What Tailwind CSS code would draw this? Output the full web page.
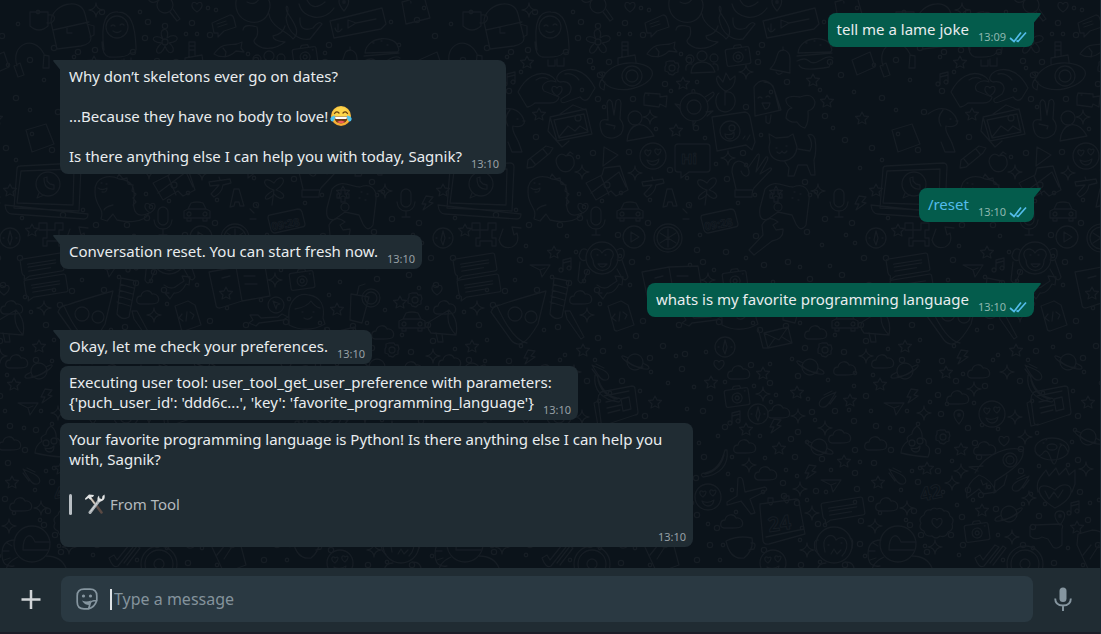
<!DOCTYPE html>
<html lang="en">
<head>
<meta charset="utf-8">
<meta name="viewport" content="width=device-width, initial-scale=1">
<title>Chat</title>
<script src="https://cdn.jsdelivr.net/npm/@tailwindcss/browser@4"></script>
</head>
<body class="relative isolate flex min-h-screen flex-col overflow-x-hidden border-r border-[#1b2a33] bg-[#0b131a] font-['Noto_Sans',sans-serif] text-[15px] leading-5 text-[#e9edef]">

<!-- Wallpaper doodles: one 433px wide group, repeated sideways -->
<svg class="pointer-events-none absolute inset-0 -z-10 h-full w-full fill-none stroke-[#161d24]" stroke-width="1.3" stroke-linejoin="round" stroke-linecap="round" aria-hidden="true">
  <defs>
    <path id="star" d="M0-6 2-2 6.500-1.500 3 2 4 6 0 4-4 6-3 2-6.500-1.500-2-2Z"/>
    <path id="spark" d="M0-7Q.5-.5 7 0 .5.5 0 7-.5.5-7 0-.5-.5 0-7Z"/>
    <path id="cloud" d="M-8 6C-13 5-12-2-7-2-6-8 2-9 4-4 9-5 12 0 10 4 9 6 5 6 0 6Z"/>
    <g id="planet"><circle r="8"/><path d="M-7-4C-14-8-16-6-8 0S14 9 14 6 10 3 8 1M-8-1C-2 4 4 6 8 5"/></g>
    <path id="heart" d="M0 5C-9-1-4-8 0-3 4-8 9-1 0 5Z"/>
    <path id="bolt" d="M-2-7 5-6 1-1 5 0-5 7-2 1-6 1Z"/>
    <g id="gear"><circle r="3"/><path d="M-2-7h4l1 2 3 0 1 4-1 2 0 3-3 1-2 2-4-1-1-2-3-1 0-4 1-2 0-3 3-1Z"/></g>
    <g id="note"><path d="M-3 5V-5L5-7V3M-3-2 5-4"/><circle cx="-5" cy="5" r="2"/><circle cx="3" cy="3" r="2"/></g>
    <g id="camera" transform="rotate(-8)"><rect x="-12" y="-8" width="24" height="17" rx="2"/><circle r="5" cy="1"/><circle r="2" cy="1"/><path d="M-4-8-2-11H4L5-8M8-5h1"/></g>
    <g id="compass"><circle r="10"/><path d="M-2 2 0-7 2 0 0 7ZM-7 0h1M6 0h1"/></g>
    <g id="msg" transform="rotate(-9)"><path d="M-19-9H19Q21-9 21-7V7Q21 9 19 9H-14L-20 12-19 8Q-21 7-21 5V-7Q-21-9-19-9ZM-14-3H14M-14 0H14M-14 4H8"/></g>
    <g id="face"><circle r="13"/><path d="M-6 4Q0 7 6 3 5 9 0 9-4 9-6 4M-5 0C-11-4-7-8-5-5-1-8-1-3-5 0M5-1C-1-5 3-9 5-6 9-9 9-4 5-1"/></g>
    <path id="plane" d="M-10-5H10L2 7 0 0ZM0 0 5-2"/>
    <path id="comet" d="M9-7-2-2C-10 2-9 9-3 8 0 8 3 3 9-7ZM5-8-3-4M9-3 3 5"/>
    <path id="banana" d="M-10-15C-12 0-3 10 14 12 18 9 14 8 12 8 2 6-5-3-8-15ZM-7-10C-4 2 3 7 12 9"/>
    <path id="pin" d="M0 7C-9-3-4-7 0-7S8-3 0 7M-1-3h2v2h-2Z"/>
    <g id="car"><path d="M-13 6V-1L-9-3-6-9Q0-11 6-9L9-3 13-1V6H-13ZM-9-3H9M-10 6V9H-6V6M6 6V9H10V6"/><circle cx="-8" cy="2" r="2"/><circle cx="8" cy="2" r="2"/></g>
    <g id="mic"><rect x="-5" y="-13" width="10" height="18" rx="5"/><path d="M-9 0Q-8 9 0 9T9 0M0 9v6M-4 15H4"/></g>
    <!-- Dots: zero-length strokes, drawn wide and then hollowed with the background colour -->
    <path id="rings" d="M35 12h0M81 22h0M98 26h0M125 23h0M78 38h0M11 52h0M28 50h0M66 52h0M90 61h0M109 62h0M100 75h0M143 35h0M165 84h0M189 60h0M262 45h0M287 82h0M330 62h0M258 62h0M9 91h0M98 99h0M133 99h0M246 107h0M36 137h0M196 128h0M129 152h0M93 153h0M170 170h0M227 179h0M243 153h0M325 116h0M305 182h0M350 20h0M368 36h0M420 48h0M341 75h0M396 60h0M382 98h0M424 112h0M345 140h0M372 148h0M418 150h0M60 225h0M29 225h0M80 218h0M118 235h0M148 223h0M189 205h0M197 250h0M256 236h0M307 232h0M325 219h0M352 223h0M429 215h0M364 258h0M386 258h0M20 260h0M69 283h0M87 272h0M132 262h0M203 262h0M226 252h0M264 265h0M288 262h0M310 279h0M342 275h0M369 285h0M426 305h0M5 291h0M37 290h0M97 290h0M143 321h0M179 325h0M219 322h0M260 330h0M286 326h0M361 325h0M412 325h0M58 327h0M98 338h0M136 336h0M163 346h0M185 354h0M305 348h0M251 365h0M344 352h0M366 341h0M402 360h0M23 381h0M9 361h0M103 351h0M150 358h0M182 369h0M270 383h0M298 376h0M366 396h0M429 381h0M5 395h0M52 386h0M87 381h0M122 381h0M210 398h0M312 412h0M335 411h0M354 421h0M376 426h0M402 430h0M8 414h0M35 428h0M145 416h0M203 411h0M225 427h0M291 439h0M298 432h0M181 431h0M355 450h0M391 450h0M5 451h0M42 443h0M88 449h0M145 460h0M204 457h0M295 457h0M322 459h0M355 473h0M374 463h0M5 471h0M46 457h0M88 471h0M196 478h0M283 483h0M297 503h0M316 491h0M357 489h0M418 482h0M35 490h0M48 495h0M147 492h0M180 494h0M284 496h0M371 499h0M414 511h0M29 517h0M63 509h0M106 516h0M175 517h0M197 515h0M361 521h0M421 535h0M18 535h0M100 527h0M155 520h0M217 528h0M264 550h0M318 524h0M360 544h0M410 525h0M427 552h0M30 545h0M90 545h0M165 545h0M197 560h0M210 545h0M301 565h0M345 565h0M121 563h0"/>
    <path id="specks" d="M73 12h0M141 8h0M149 10h0M119 34h0M130 34h0M7 57h0M21 72h0M93 68h0M181 54h0M258 53h0M171 91h0M197 82h0M320 90h0M271 92h0M82 90h0M104 107h0M156 129h0M205 138h0M261 135h0M78 157h0M216 164h0M246 165h0M316 192h0M187 178h0M324 22h0M357 8h0M384 24h0M404 12h0M332 45h0M374 65h0M410 80h0M354 92h0M396 110h0M333 128h0M398 134h0M360 168h0M382 160h0M16 210h0M79 194h0M84 207h0M102 201h0M121 193h0M150 200h0M200 235h0M238 203h0M255 195h0M310 195h0M322 245h0M346 235h0M388 218h0M355 243h0M26 246h0M67 236h0M76 252h0M120 256h0M148 258h0M190 265h0M214 270h0M246 258h0M273 282h0M300 267h0M330 266h0M352 288h0M391 297h0M15 280h0M52 277h0M84 281h0M130 285h0M262 295h0M318 310h0M360 308h0M397 312h0M420 290h0M44 330h0M100 304h0M160 308h0M194 300h0M222 299h0M253 323h0M300 323h0M335 335h0M388 349h0M420 340h0M21 346h0M65 355h0M95 360h0M120 347h0M151 372h0M176 356h0M206 352h0M270 364h0M292 359h0M328 380h0M355 373h0M373 375h0M418 361h0M30 374h0M60 360h0M110 393h0M140 391h0M168 383h0M194 387h0M225 382h0M254 386h0M276 395h0M308 399h0M354 386h0M371 411h0M407 411h0M430 402h0M14 404h0M41 403h0M99 401h0M142 430h0M187 409h0M218 436h0M260 436h0M271 402h0M315 420h0M349 410h0M390 428h0M418 424h0M49 425h0M65 429h0M104 433h0M139 442h0M170 449h0M199 443h0M232 457h0M265 458h0M307 442h0M360 462h0M331 470h0M412 471h0M19 461h0M106 466h0M135 465h0M185 462h0M228 474h0M286 470h0M297 476h0M326 492h0M420 468h0M10 492h0M56 487h0M98 494h0M166 500h0M192 503h0M232 490h0M263 492h0M307 500h0M355 502h0M401 490h0M24 505h0M40 500h0M90 504h0M112 504h0M157 503h0M208 524h0M236 512h0M302 528h0M325 525h0M380 513h0M406 520h0M65 535h0M26 555h0M100 548h0M135 548h0M185 535h0M223 545h0M300 540h0M365 556h0M425 546h0M70 560h0M150 565h0M220 560h0M320 562h0"/>
    <g id="doodles">
      <g stroke-width="6.6"><use href="#rings"/></g>
      <g stroke-width="4.8"><use href="#specks"/></g>
      <g class="stroke-[#0b131a]" stroke-width="4"><use href="#rings"/></g>
      <g class="stroke-[#0b131a]" stroke-width="2.2"><use href="#specks"/></g>
      <!-- stars -->
      <use href="#star" x="27" y="62"/><use href="#star" x="39" y="114"/><use href="#star" x="183" y="83"/><use href="#star" x="176" y="130"/><use href="#star" x="313" y="80"/><use href="#star" x="327" y="101"/><use href="#star" x="276" y="192"/><use href="#star" x="398" y="230"/><use href="#star" x="54" y="252"/><use href="#star" x="333" y="302"/><use href="#star" x="270" y="309"/><use href="#star" x="405" y="346"/><use href="#star" x="83" y="350"/><use href="#star" x="263" y="373"/><use href="#star" x="13" y="372"/><use href="#star" x="211" y="382"/><use href="#star" x="297" y="392"/><use href="#star" x="350" y="400"/><use href="#star" x="380" y="384"/><use href="#star" x="155" y="402"/><use href="#star" x="246" y="429"/><use href="#star" x="28" y="449"/><use href="#star" x="279" y="448"/><use href="#star" x="344" y="461"/><use href="#star" x="378" y="482"/><use href="#star" x="427" y="468"/><use href="#star" x="49" y="510"/><use href="#star" x="144" y="527"/><use href="#star" x="376" y="190"/><use href="#star" x="362" y="118"/>
      <!-- sparkles -->
      <use href="#spark" x="29" y="10"/><use href="#spark" x="246" y="72"/><use href="#spark" x="150" y="117"/><use href="#spark" x="228" y="158"/><use href="#spark" x="82" y="172"/><use href="#spark" x="135" y="173"/><use href="#spark" x="318" y="191"/><use href="#spark" x="208" y="280"/><use href="#spark" x="87" y="315"/><use href="#spark" x="410" y="308"/><use href="#spark" x="74" y="372"/><use href="#spark" x="263" y="394"/><use href="#spark" x="366" y="356"/><use href="#spark" x="41" y="389"/><use href="#spark" x="298" y="416"/><use href="#spark" x="325" y="428"/><use href="#spark" x="424" y="413"/><use href="#spark" x="82" y="417"/><use href="#spark" x="92" y="437"/><use href="#spark" x="249" y="465"/><use href="#spark" x="28" y="471"/><use href="#spark" x="153" y="469"/><use href="#spark" x="300" y="489"/><use href="#spark" x="312" y="513"/><use href="#spark" x="407" y="508"/><use href="#spark" x="19" y="483"/><use href="#spark" x="79" y="537"/><use href="#spark" x="375" y="526"/><use href="#spark" x="307" y="550"/><use href="#spark" x="2" y="547"/><use href="#spark" x="96" y="498"/>
      <!-- clouds, planets -->
      <use href="#cloud" x="378" y="308"/><use href="#cloud" x="81" y="298"/><use href="#cloud" x="316" y="333"/><use href="#cloud" x="239" y="373"/><use href="#cloud" x="345" y="369"/><use href="#cloud" x="383" y="362"/><use href="#cloud" x="46" y="372"/><use href="#cloud" x="25" y="398"/><use href="#cloud" x="279" y="412"/><use href="#cloud" x="340" y="437"/><use href="#cloud" x="376" y="444"/><use href="#cloud" x="52" y="449"/><use href="#cloud" x="245" y="447"/><use href="#cloud" x="266" y="474"/><use href="#cloud" x="387" y="505"/><use href="#cloud" x="232" y="522"/>
      <use href="#planet" x="135" y="362"/><use href="#planet" x="310" y="367"/><use href="#planet" x="319" y="447"/><use href="#planet" x="155" y="437"/>
      <g transform="translate(405 371) scale(-1 1)"><use href="#planet"/></g><g transform="translate(76 514) scale(-1 1)"><use href="#planet"/></g>
      <!-- small repeated things -->
      <use href="#heart" x="130" y="7"/><use href="#heart" x="57" y="91"/><use href="#heart" x="83" y="208"/><use href="#heart" x="219" y="365"/><use href="#heart" x="71" y="441"/><use href="#heart" x="4" y="523"/><use href="#heart" x="370" y="290"/>
      <use href="#bolt" x="361" y="203"/><use href="#bolt" x="30" y="357"/><use href="#bolt" x="413" y="396"/><use href="#bolt" x="276" y="426"/><use href="#bolt" x="311" y="472"/>
      <use href="#gear" x="172" y="68"/><use href="#gear" x="348" y="300"/><use href="#gear" x="325" y="350"/><use href="#gear" x="10" y="437"/>
      <use href="#note" x="10" y="79"/><use href="#note" x="66" y="265"/><use href="#note" x="235" y="418"/><use href="#note" x="141" y="508"/>
      <use href="#camera" x="238" y="56"/><use href="#camera" x="235" y="280"/><use href="#camera" x="237" y="397"/><use href="#camera" x="44" y="532"/>
      <use href="#compass" x="376" y="238"/><use href="#compass" x="225" y="347"/><use href="#compass" x="258" y="414"/>
      <use href="#msg" x="408" y="265"/><use href="#msg" x="412" y="286"/><use href="#msg" x="343" y="509"/>
      <use href="#face" x="153" y="156"/><use href="#face" x="59" y="414"/><use href="#face" x="208" y="497"/><use href="#face" x="273" y="563"/>
      <use href="#plane" x="40" y="270"/><use href="#plane" x="394" y="408"/><use href="#plane" x="331" y="485"/>
      <use href="#comet" x="327" y="399"/><use href="#comet" x="87" y="483"/><g transform="translate(398 476) scale(-1 1)"><use href="#comet"/></g><g transform="translate(101 372) scale(-1 1)"><use href="#comet"/></g>
      <use href="#banana" x="105" y="390"/><g transform="translate(217 465) scale(-1 1)"><use href="#banana"/></g>
      <use href="#pin" x="26" y="417"/><use href="#pin" x="127" y="518"/><use href="#pin" x="277" y="4"/>
      <use href="#car" x="130" y="212"/><use href="#car" x="345" y="322"/>
      <use href="#mic" x="339" y="202"/><use href="#mic" x="96" y="220"/>
      <!-- penguin, magnifier, flower, submarine -->
      <circle cx="50" cy="27" r="11"/><path d="M37 50C33 20 40 11 51 12 64 12 68 25 69 47Q70 54 63 53 60 58 42 57 35 55 35 42M44 26q2-2 4 0M53 25q2-2 4 0M46 31q4 3 8 0M48 60v6h7v-6M57 59v7h7v-8"/>
      <circle cx="98" cy="5" r="8"/><path d="m103 12 7 9 3-2-7-10M92 0Q84 6 80-3"/>
      <circle cx="98" cy="42" r="3"/><path d="M96 39C89 28 104 25 100 38 110 31 116 42 102 43 112 50 102 59 98 46 94 59 83 52 95 43 80 42 87 32 96 39Z"/>
      <path d="M102 79C112 58 146 60 152 71 157 86 112 100 102 79ZM118 64v-6l17-3 1 7M122 57V42h6v13M122 46h6M122 50h6M102 76q-6-4 0-4t0 7q-6 8 2 11l1-8"/><circle cx="132" cy="76" r="10"/><circle cx="132" cy="76" r="6"/>
      <!-- speech, fish, people, bell, gorilla, banner, burger -->
      <path d="m145 23 18-8q3 0 4 4l2 8-12 4-6 6 0-4-4 0ZM150 24l9-3M151 27l9-3M147 54C155 42 164 45 170 44l5-2-1 6 3 4-8-1C162 58 153 58 147 54M156 48l3 4-1 5"/>
      <circle cx="202" cy="56" r="5"/><circle cx="190" cy="59" r="4"/><circle cx="214" cy="58" r="4"/><path d="M191 73q1-11 11-11t13 10ZM186 70q-1-7 6-6M218 70q1-7-5-6M270 69C280 60 274 50 284 50 293 53 289 62 290 73ZM276 72q2 4 6 1M283 50v-3"/>
      <path d="M170-3C162 22 196 32 202 11 206-2 197-5 192-2M180 2q8 4 12-3M202 14C204 28 222 32 226 39 235 32 225 20 220 12 217 3 224 4 219 18 221 34 233 41 243 39L255 24Q252 20 246 28 232 33 233 18M232 4C236 20 258 22 267 8M240 0q6 12 18 2M176 30q1-7 14-3 2 8-2 12t8 9q12 2 22-6-12-1-12-6 10-2 12-10"/>
      <path d="m263 21 52-13 4 16-5 5-47 9ZM289 23l-8-3v8l8-5 20-4M271 24v6M268 28q2 7 7 1M298 53C300 35 329 35 331 47Q333 51 330 52L298 53ZM297 56l35-3M297 61q8-4 12 0t12-1 12-2M299 65q2 7 30 2l2-5M306 43h1M314 41h1M320 45h1"/>
      <!-- heart hands, picture, peace, person, plant, ice pop -->
      <path d="M18 92C26 76 38 72 46 74 51 75 56 79 56 82 47 78 39 86 44 91L59 97Q58 103 50 103L35 103Q30 107 27 107ZM95 88C88 74 76 66 63 71 57 74 54 80 60 82 69 80 74 87 69 94L61 99Q60 104 66 102L80 97Q85 103 89 98ZM36 80q6-4 12-1M65 74q8-2 14 6"/>
      <path d="m50 117 36-8 6 25-35 7ZM54 120l30-6 4 18-29 6ZM59 137l9-11 7 5 5-5 8 5M50 118l-2 13 14 16 7-6M60 114l13-9 13 5"/><circle cx="78" cy="118" r="3"/>
      <path d="M102 133C98 123 100 118 108 120L107 103Q109 97 112 102L114 115 116 101Q120 97 121 103L120 119Q126 126 121 134C114 140 105 139 102 133ZM106 124l9 2-1 3"/>
      <circle cx="135" cy="118" r="7"/><path d="M127 141C128 123 144 118 154 136ZM144 97l1-4 15 1 0 3 7-1-1 11-6-3-1 3-15-2ZM148 95h1"/>
      <path d="M225 91C215 84 216 77 218 76L223 82 226 73 230 80 235 76C236 83 232 90 225 91ZM225 91v14M226 92C238 90 239 111 225 112 213 111 215 95 219 93M254 87Q262 75 273 86L281 110 255 116ZM264 82q8 0 10 7l5 20M266 116v6q3 3 4 0l1-7M258 98q2-2 4 0M266 97q2-2 4 0M262 103h8q-1 6-5 6Z"/>
      <!-- turtle, blob, photo bubble, cat -->
      <circle cx="194" cy="107" r="14"/><circle cx="194" cy="107" r="7"/><path d="m205 97 8-5q3 2-2 6l-4 4M192 93v-3q3-2 3 3M180 105l-5-1 5 5M193 121v5l3-5M206 112l7-1-6 5"/>
      <path d="M286 99Q290 95 300 97 312 92 315 102 315 109 308 111 309 122 305 128 300 127 297 122 290 123 286 118 287 108 292 108 285 104 286 99Z"/>
      <path d="m212 117 33-5q4 1 5 5l5 25-3 8-6-5-29 6ZM243 139l2-3M247 140l3-5"/><circle cx="230" cy="131" r="10"/><circle cx="232" cy="128" r="3"/><path d="M225 134q6 2 9-2 1 7-4 7t-5-5"/>
      <path d="m270 142-1-8 7 4 12-1 5-3 4 13q-1 12-13 14-15 0-15-14ZM298 149l12 2q4-8-2-16 5-2 7 4 2 12-1 21l1 15h-4l-4-10h-9l-4 11h-6l1-8-4-6M276 148h1M286 146h1M277 152q3 3 5-1 2 4 5 0"/>
      <!-- pencil, apple, play, hi, ok hand, dinosaur, map -->
      <path d="m28 160 18-14 7 2-3 5-17 14-6 1ZM43 149l4 5M31 159l4 5M66 156C60 151 54 158 57 165 61 174 70 174 74 165 75 156 70 154 66 156ZM67 155l3-3 3 2M104 147l14 8-15 11ZM178 144h29q3 0 3 3v22q0 3-3 3h-18l-8 6v-6h-3q-3 0-3-3v-22q0-3 3-3Z"/>
      <text x="181" y="164" font-size="15" font-weight="700" stroke-width="1">Hi</text>
      <path d="M236 189l-4-17C232 160 241 157 248 168 252 177 244 179 241 171M248 168 257 155Q260 152 259 158L256 172 266 157Q269 156 267 161L260 174 270 168Q274 168 268 173L254 188Q252 191 252 197H235V190H252"/>
      <path d="M28 192C27 175 44 175 52 179 64 180 68 186 67 198 65 212 70 219 82 213 77 224 58 222 50 220L46 214 40 221 34 219C38 208 28 207 28 192ZM31 188q4 3 9 0 0 5-5 4M34 183h1M39 184h1M46 205q-8 2-9 5M50 178l2-4 4 5 4-1 1 6 5 1-1 6 4 3-3 4 3 4-3 3"/>
      <path d="m86 183 16-8 2-7 16-2 8 24-12 6-5-5-15 9ZM101 176l8 19M91 193l28-21 7 15"/><circle cx="107" cy="185" r="3"/>
      <path d="m142 182 21-3 1 4-8 2q-1 8-9 12l-3-3 8-9-9 1ZM152 177l1 3M163 207l4-18h5l5 17h-4l-1-4h-4l-1 4ZM207 190C193 186 196 174 207 183 214 172 223 181 209 190 223 194 215 204 207 194 201 203 191 199 207 190L205 205"/>
      <!-- laptop, dog, gamepad -->
      <path d="m386 166 57-3q4 0 4 4l-2 44-65-3 3-39q0-3 3-3ZM387 171l53-2-1 36-56-2ZM371 205l83 9q0 5-4 5l-72-5q-6 0-7-9"/><circle cx="414" cy="184" r="12"/><path d="M405 193l-2 5 7-3M410 178q0 12 10 11l0-4-4-1-3-3 0-4Z"/>
      <path d="M-5 114C8 104 20 109 24 120 26 125 20 128 13 126 11 132 18 138 20 146L22 152H12L8 142M17 119h1M23 121h2M10 110q-7 8-2 16"/>
      <path d="M265 189C275 178 284 187 293 187 304 183 310 189 309 200L306 225Q301 233 296 224L292 215 278 212 268 219Q258 222 260 208ZM274 190h4v4h4v4h-4v4h-4v-4h-4v-4h4ZM294 192h1M300 194h1M292 198h1M298 200h1"/><circle cx="278" cy="207" r="4"/>
      <!-- backpack, bag, headphones -->
      <path d="M-16 22C-16 4 14-4 18 14L24 38Q24 44 14 46L-10 49ZM-14 30 22 22M0 28v5h5M20 24l7 2 0 9-4 2M335 2l22-6 6 22-24 6ZM344 3q-2-9 7-8M383 66C376 44 400 34 410 54M380 66l6-3 4 12-6 2ZM410 55l5 1 0 12-6 0ZM352 60l18-8 5 15-18 8ZM392 130l20-6 8 20-22 8ZM396 12h18v14q-9 8-18 0ZM414 15q8-1 6 5-2 4-7 3"/>
      <!-- invader, reload, clock, wrench, play, monkey, orange -->
      <path d="M405 223h8v7h8v-7h8v7h-4v8h4v8h-4v-5h-12v5h-4v-8h4v-8h-8ZM3 229l-4 11q3 10 13 7 8-4 5-14l-3 2-2-8 9 1M203 215l28-6q3 0 4 3l3 12q0 3-3 3l-27 6q-3 0-4-3l-3-12q0-3 2-3Z"/>
      <text x="204" y="228" font-size="11" font-weight="700" stroke-width=".8" transform="rotate(-10 219 222)">09:28</text>
      <path d="M262 225q6-11 16-3l-5 3 3 5 7-1q1 10-11 12l-18 14-5-5 14-15ZM187 213l-4-4M189 219h-6M191 208l-2-4"/>
      <circle cx="134" cy="237" r="11"/><path d="m131 232 8 5-8 5Z"/><circle cx="168" cy="238" r="14"/><circle cx="168" cy="238" r="11"/><path d="M168 238v-9M168 238l8-5M168 238l8 5M168 238v9M168 238l-8 5M168 238l-8-5"/>
      <circle cx="102" cy="258" r="16"/><path d="M93 260C86 250 98 245 102 253 107 245 118 251 111 260 112 274 93 274 93 260ZM97 255h1M105 255h1M98 264q4 6 9 0ZM87 250q-6-4-8 6 2 6 7 4M117 250q8-5 7 6-2 6-7 4M80 262l-2 18q3 6 6 0l4-10M122 260l6 17q-2 5-6 1l-5-9"/>
      <!-- book, code file, arrows, pizza, tube, megaphone, drink -->
      <path d="m142 272 27-5 29-1 5 30-28 5-22 7q-4 0-4-3ZM169 267l6 34M155 278l8-2M177 276h11M178 284h12"/><use href="#star" x="159" y="293"/>
      <path d="m108 306 13-5 7 4 6 20-17 6q-3 0-3-3ZM115 314l-3 4 4 3M120 312l-1 9M123 312l4 3-2 4M97 285q8 6 14 0l6-4-2-5 8 1-1 8-3-1q-5 10-12 9l-4 6-5-6 4 0M38 324C26 345 18 348 11 340L-9 312Q-7 305 0 305 14 300 46 291ZM-3 306q16 35 30 37"/><circle cx="15" cy="314" r="7"/><circle cx="31" cy="317" r="6"/><path d="M54 278l15 3-7 36q-7 4-12-3ZM53 284l14 4M52 290l14 4M51 296l13 4M50 302l13 4M65 311l5 0 14 26-3 2-14-20ZM362 322l20-12q10 10 7 25l-25-2q-5-5-2-11ZM382 310q-4 14 7 25M369 333l2 9h5l-1-8M284 294l18 3-7 26-12-3ZM290 295l2-9 6-2"/><circle cx="304" cy="298" r="9"/><circle cx="304" cy="298" r="6"/>
      <path d="M222 319C220 300 232 292 242 295 254 297 258 306 256 318L258 324Q240 334 222 325ZM228 309q12-2 16-8 4 6 9 7M235 312h1M246 312h1M237 318q4 3 8-1M183 315l8 0 3 3 17-1 4-3 6 3-5 3-24 3-3 3-7-3 4-3Z"/><circle cx="209" cy="305" r="8"/><path d="m206 301 7 3-3 1-1 4Z"/>
      <!-- envelope, newspaper, poop, donut, rocket, flaming heart -->
      <path d="m264 333 24-6 4 16-24 5ZM264 333l15 7 9-13M268 348l7-10M292 343l-10-6M258 328l5 20h5M101 392l31-6q3 0 3 3l3 23q0 3-3 3l-30 10q-4 0-4-3l-3-23q0-4 3-7ZM104 396l25-5M106 402l9-2M107 408l14-3M108 413l12-3M121 399l8-2 2 12-8 2ZM98 401l-4 2 4 23 7-2M417 426Q412 430 412 434 405 437 408 441 401 446 401 453 413 456 428 457 432 448 426 445 427 439 422 438 423 431 417 426Z"/><circle cx="412" cy="443" r="3"/><circle cx="420" cy="441" r="3"/><path d="M411 448q6 2 9-2 0 6-4 6t-5-4"/>
      <ellipse cx="119" cy="449" rx="17" ry="11"/><ellipse cx="119" cy="447" rx="5" ry="3"/><path d="M102 451q4 8 8 2t8 6 7-5 10-2M110 443h1M127 444h1M113 440l1-1"/>
      <path d="M42 473C53 452 77 446 90 450 92 463 74 473 62 481M50 466 36 467 45 471M62 481l-1 12 10-8 3-10M46 475q12 4 17 17L50 494 46 489 34 498Q32 484 46 475ZM48 480l2 5 4-2-1 6"/><circle cx="77" cy="460" r="7"/><circle cx="77" cy="460" r="4"/>
      <path d="M122 508C98 494 104 478 122 490 136 476 150 494 122 508ZM105 492C102 480 109 476 113 470L116 476 123 468 126 475 133 468 136 475 142 470 142 484 139 492M112 491l4 8 5-7 4 6 5-8"/>
      <!-- airplane, calendar, badge, sunglasses, cup, sloth, astronaut -->
      <path d="M238 478q4-2 5 3l2 11 20-5q4 2-1 5l-14 7 5 14-4 1-10-13-14 4 0-3 10-6ZM260 504l36-5q3 0 3 3l6 32-36 10q-5 1-6-3l-3-33q0-4 0-4ZM268 502v-4h5v4q-2 6-5 0M284 500v-4h5v4q-2 6-5 0M266 537l38-8"/>
      <text x="268" y="530" font-size="20" font-weight="700" stroke-width="1" transform="rotate(-8 282 523)">24</text><text x="-13" y="499" font-size="19" font-weight="700" stroke-width="1" transform="rotate(-12 0 493)">42</text>
      <path d="M4 509q4-2 7 2 5-1 6 5 5 3 2 8 2 6-4 8-2 6-8 4-4 4-8 0-7 1-8-5-6-2-3-8-3-5 3-8 1-6 7-5 2-3 6-1ZM97 527q1-4 5-2l24-1q5 0 3 5l0 16q-5 5-9 2l-5-8-6-2q-7 4-12-1ZM226 541q12-6 26-3 2 12-8 20-14 2-18-17ZM251 543q6-1 3 6l-5 1"/>
      <circle cx="334" cy="545" r="18"/><path d="M325 552C320 534 334 532 336 540 345 532 352 546 342 556M328 545h1M341 543h1M331 554l3-5 3 5 4-4M318 540q-5-1-3 10l4 5M350 538q4 1 2 10M326 563q-8 0-9 8M345 562q10 0 9 9"/>
      <circle cx="398" cy="544" r="18"/><path d="M389 550C389 535 397 531 401 542L416 542M389 550H414M381 540Q368 540 368 554T380 566M373 543l5 3M369 551h6M370 560l6-2M384 557q-13 6-12 16M412 556q15 0 20 12"/>
      <circle cx="92" cy="564" r="18"/><circle cx="92" cy="564" r="14"/><circle cx="92" cy="564" r="5"/><path d="m42 558 5-3 3 5 12-15 4 2-15 19q-5 3-9-8M57 563l13-17 3 2-13 17M145 534l14-4q8 0 12 5l8 30-22 8-13-28ZM150 555l8-10M157 559l9-14"/>
    </g>
  </defs>
  <use href="#doodles" x="-366"/><use href="#doodles" x="67"/><use href="#doodles" x="500"/><use href="#doodles" x="933"/>
</svg>

<!-- Shared icon shapes -->
<svg class="hidden" aria-hidden="true">
  <symbol id="read" viewBox="0 0 18 12"><path d="M1 7 5 10.500 12 1.500M7.500 9.500 9 10.500 17 1.500" fill="none" stroke="#53bdeb" stroke-width="1.700"/></symbol>
  <symbol id="tail" viewBox="0 0 8 11"><path d="M0 0H7Q8.500 0 7.500 1.500L1 9.500V11H0Z" fill="currentColor"/></symbol>
</svg>

<main class="flex flex-1 flex-col items-start pt-[13px] pb-5 pl-[60px] pr-[66px]">
  <article class="relative self-end rounded-lg rounded-tr-none bg-[#045c4c] pt-[6px] pr-[7px] pb-[2px] pl-[9px]">
    <svg class="absolute top-0 -right-[7px] h-[11px] w-2 text-[#045c4c]" aria-hidden="true"><use href="#tail"/></svg>
    <p>tell me a lame joke<span class="ml-[9px] inline-flex items-center gap-[3px] align-[-6px] text-[11px] leading-4 text-[#8fb8b0]"><time>13:09</time><svg class="h-3 w-[18px]" role="img" aria-label="Read"><use href="#read"/></svg></span></p>
  </article>

  <article class="relative mt-[13px] rounded-lg rounded-tl-none bg-[#202c33] pt-[6px] pr-[7px] pb-[2px] pl-[9px]">
    <svg class="absolute top-0 -left-[7px] h-[11px] w-2 -scale-x-100 text-[#202c33]" aria-hidden="true"><use href="#tail"/></svg>
    <p class="mb-5">Why don’t skeletons ever go on dates?</p>
    <p class="mb-5 flex items-center gap-[2px]">...Because they have no body to love!
      <svg class="h-[22px] w-[22px] -my-px" viewBox="0 0 22 22" role="img" aria-label="Face with tears of joy">
        <defs><radialGradient id="skin" cx=".5" cy=".4" r=".6"><stop offset=".5" stop-color="#fdd54a"/><stop offset="1" stop-color="#f2a02c"/></radialGradient></defs>
        <circle cx="11" cy="11" r="10" fill="url(#skin)"/>
        <path d="M4.500 8.500Q6.500 5.500 9 8M13 8Q15.500 5.500 17.500 8.500" fill="none" stroke="#6b4210" stroke-width="1.300" stroke-linecap="round"/>
        <path d="M4 11.500H18Q17 18.500 11 18.500T4 11.500Z" fill="#6b3a12"/><path d="M5 11.800H17L16.500 14H5.500Z" fill="#fff"/><path d="M7 17Q11 14.500 15 17 11 19.500 7 17Z" fill="#ed5a5a"/>
        <path d="M5 10.500Q.5 11 .3 14 .8 17 3 16.500 5 15 5 10.500ZM17 10.500Q21.500 11 21.700 14 21.200 17 19 16.500 17 15 17 10.500Z" fill="#4fc3ee"/>
      </svg></p>
    <p>Is there anything else I can help you with today, Sagnik?<time class="ml-[9px] inline-block align-[-6px] text-[11px] leading-4 text-[#97a0a6]">13:10</time></p>
  </article>

  <article class="relative mt-[14px] self-end rounded-lg rounded-tr-none bg-[#045c4c] pt-[6px] pr-[7px] pb-[2px] pl-[9px]">
    <svg class="absolute top-0 -right-[7px] h-[11px] w-2 text-[#045c4c]" aria-hidden="true"><use href="#tail"/></svg>
    <p><a href="#reset" class="text-[#53bdeb]">/reset</a><span class="ml-[9px] inline-flex items-center gap-[3px] align-[-6px] text-[11px] leading-4 text-[#8fb8b0]"><time>13:10</time><svg class="h-3 w-[18px]" role="img" aria-label="Read"><use href="#read"/></svg></span></p>
  </article>

  <article class="relative mt-[13px] rounded-lg rounded-tl-none bg-[#202c33] pt-[6px] pr-[7px] pb-[2px] pl-[9px]">
    <svg class="absolute top-0 -left-[7px] h-[11px] w-2 -scale-x-100 text-[#202c33]" aria-hidden="true"><use href="#tail"/></svg>
    <p>Conversation reset. You can start fresh now.<time class="ml-[9px] inline-block align-[-6px] text-[11px] leading-4 text-[#97a0a6]">13:10</time></p>
  </article>

  <article class="relative mt-[14px] self-end rounded-lg rounded-tr-none bg-[#045c4c] pt-[6px] pr-[7px] pb-[2px] pl-[9px]">
    <svg class="absolute top-0 -right-[7px] h-[11px] w-2 text-[#045c4c]" aria-hidden="true"><use href="#tail"/></svg>
    <p>whats is my favorite programming language<span class="ml-[9px] inline-flex items-center gap-[3px] align-[-6px] text-[11px] leading-4 text-[#8fb8b0]"><time>13:10</time><svg class="h-3 w-[18px]" role="img" aria-label="Read"><use href="#read"/></svg></span></p>
  </article>

  <article class="relative mt-[13px] rounded-lg rounded-tl-none bg-[#202c33] pt-[6px] pr-[7px] pb-[2px] pl-[9px]">
    <svg class="absolute top-0 -left-[7px] h-[11px] w-2 -scale-x-100 text-[#202c33]" aria-hidden="true"><use href="#tail"/></svg>
    <p>Okay, let me check your preferences.<time class="ml-[9px] inline-block align-[-6px] text-[11px] leading-4 text-[#97a0a6]">13:10</time></p>
  </article>

  <article class="mt-[2px] rounded-lg bg-[#202c33] pt-[6px] pr-[7px] pb-[2px] pl-[9px]">
    <p>Executing user tool: user_tool_get_user_preference with parameters:<br>{'puch_user_id': 'ddd6c...', 'key': 'favorite_programming_language'}<time class="ml-[9px] inline-block align-[-6px] text-[11px] leading-4 text-[#97a0a6]">13:10</time></p>
  </article>

  <article class="mt-[3px] flex max-w-[633px] flex-col rounded-lg bg-[#202c33] pt-[6px] pr-[7px] pb-[2px] pl-[9px]">
    <p>Your favorite programming language is Python! Is there anything else I can help you with, Sagnik?</p>
    <blockquote class="mt-6 flex items-center text-[#b4babe]">
      <span class="h-[21px] w-[3px] rounded-sm bg-[#b9bfc4]"></span>
      <svg class="mr-1 ml-3 h-[22px] w-[22px]" viewBox="0 0 22 22" role="img" aria-label="Hammer and wrench">
        <path d="M7.500 6 17.500 19.500" stroke="#5a4a44" stroke-width="2.600" stroke-linecap="round"/>
        <path d="M6.500 5 11 11" stroke="#cfc9bd" stroke-width="1.800"/>
        <path d="M1 5.500 5 1.500 10 2 9 4 7.500 3.800 7.500 6 6 6.500 4.500 5 1.500 7Z" fill="#e2e4e4"/>
        <path d="M6 19.500 15.500 7" stroke="#aeb4b7" stroke-width="3" stroke-linecap="round"/>
        <path d="M14 8.500Q12.500 4.500 15 2.500L15.500 5.500 18 6 18.500 3 20.500 1.500Q21.500 6.500 18 8 16 9 14 8.500Z" fill="#e2e4e4"/>
        <path d="M6.500 18.500 13 10" stroke="#dfe2e3" stroke-width=".8"/>
      </svg>
      <span>From Tool</span>
    </blockquote>
    <time class="mt-[14px] self-end text-[11px] leading-4 text-[#97a0a6]">13:10</time>
  </article>
</main>

<footer class="flex items-center border-b-2 border-[#1c1d28] bg-[#202c33] pt-2 pb-[10px]">
  <button type="button" class="flex w-[61px] shrink-0 justify-center" aria-label="Attach">
    <svg class="h-5 w-5 stroke-[#d1d5d8]" viewBox="0 0 20 20" stroke-width="2.500" aria-hidden="true"><path d="M10 1V20M.5 10.500H19.500"/></svg>
  </button>
  <div class="flex h-[46px] min-w-0 flex-1 items-center rounded-lg bg-[#2a3942] pl-[15px]">
    <button type="button" aria-label="Emojis and stickers">
      <svg class="h-[22px] w-[22px]" viewBox="0 0 22 22" fill="none" stroke="#8696a0" stroke-width="1.700" stroke-linejoin="round" aria-hidden="true">
        <path d="M12.500 20.800H8Q1.200 20.800 1.200 14V8Q1.200 1.200 8 1.200H14Q20.800 1.200 20.800 8V12.500Q18.500 19.500 12.500 20.800ZM20.800 12.500Q14.500 12.500 14 15.500T12.500 20.800"/>
        <circle cx="7.500" cy="8" r="1.600" fill="#8696a0" stroke="none"/><circle cx="14.500" cy="8" r="1.600" fill="#8696a0" stroke="none"/>
        <path d="M6 12.500Q10 14.500 15 12.500L13 17Q9 17 7 14Z" fill="#8696a0" stroke="none"/>
      </svg>
    </button>
    <span class="ml-3 h-[21px] w-[2px] bg-[#dfe3e6]"></span>
    <label for="message" class="sr-only">Message</label>
    <input id="message" type="text" placeholder="Type a message" class="ml-[2px] min-w-0 flex-1 bg-transparent text-[16px] leading-6 outline-none placeholder:text-[#84939c]">
  </div>
  <button type="button" class="flex w-[67px] shrink-0 justify-center pr-2" aria-label="Voice message">
    <svg class="h-6 w-[18px]" viewBox="0 0 18 24" fill="none" stroke="#8696a0" aria-hidden="true"><rect x="5.500" y=".5" width="7" height="14.500" rx="3.500" fill="#8696a0" stroke="none"/><path d="M1.200 11.500Q1.200 18.500 9 18.500T16.800 11.500M9 18.500V24" stroke-width="1.900"/></svg>
  </button>
</footer>
</body>
</html>
